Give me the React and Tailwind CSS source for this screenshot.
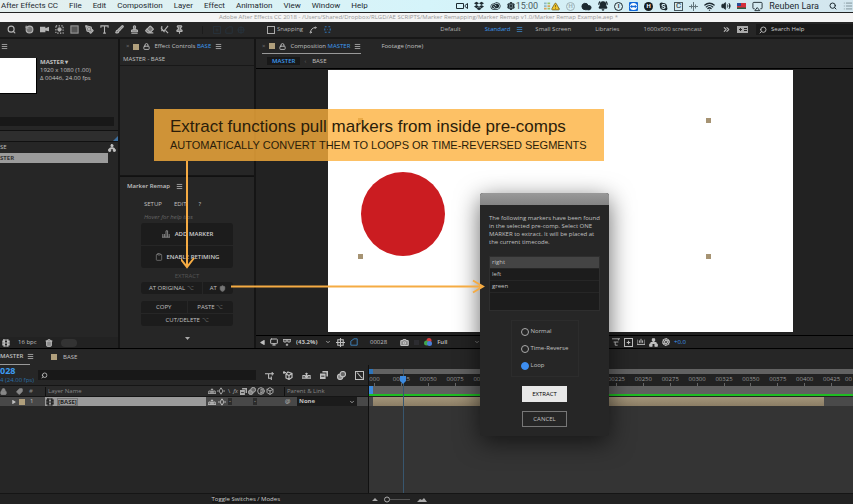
import React, { useState } from 'react';
import {
  Airplay, AlertTriangle, BellRing, Brush, Camera, ChevronDown, ChevronsRight, Cloud, Eraser, Film, List,
  Lock, Menu, Monitor, Network, Pin, RotateCcw, Search, Settings, Stamp, Tag, Trash2, Volume2, Wifi,
  PenTool, Box, Aperture, Shield, Clipboard, Spline, Contrast,
} from 'lucide-react';
import { FaDropbox, FaSkype, FaPlay } from 'react-icons/fa';
import { SiAdobecreativecloud } from 'react-icons/si';

const menus = ['After Effects CC', 'File', 'Edit', 'Composition', 'Layer', 'Effect', 'Animation', 'View', 'Window', 'Help'];
const frames = ['000', '00025', '00050', '00075', '00100', '00125', '00150', '00175', '00200', '00225', '00250', '00275', '00300', '00325', '00350', '00375', '00400', '00425'];
const markers = ['right', 'left', 'green'];
const modes = ['Normal', 'Time-Reverse', 'Loop'];

// small panel glyphs, all on a 10x10 grid
const glyphs = {
  video: <path d="M0 2h6v1.500L10 2v5L6 6v2H0z" fill="currentColor" stroke="none" />,
  region: <><rect x="1" y="1" width="8" height="8" strokeDasharray="1.500 1.500" /><circle cx="5" cy="5" r="1.800" fill="currentColor" /></>,
  square: <rect x="1" y="1" width="8" height="8" fill="#555" stroke="#999" />,
  type: <path d="M1 3V1h8v2M5 1v8M3.500 9h3" />,
  roto: <path d="M9 1L4 7M1 3l4 5M6 6l3 3M2 1v6" />,
  snap: <path d="M2 2h2M6 2h2M2 8h2M6 8h2M2 4v2M8 4v2M5 5h0.500" />,
  flow: <path d="M0 3h4M4 3h6M4 3v5h3M7 6v4M8 1v4" />,
  cube: <path d="M1 1v3M0 2.500h3M5 2l4 1.500v4L6 9.500 3 8V4zM3 4l3 1.500 3-2M6 5.500v4" />,
  shy: <path d="M0 8h10M1 8V5h2.500V8M6.500 8V5H9v3M3.500 6h3M5 2v6M3.500 3h3" />,
  hat: <path d="M0 7.500h10v1.500H0zM2.500 7c0-3 1-5 2.500-5s2.500 2 2.500 5z" fill="currentColor" stroke="none" />,
  frame: <><path d="M0 3h7v7H0zM3 0h7v7H8V2H3z" fill="currentColor" stroke="none" /><path d="M1.500 6.500h4" stroke="#262626" /></>,
  blur: <><circle cx="3.500" cy="6.500" r="3" fill="#888" /><circle cx="6.500" cy="3.500" r="3" fill="#666" /></>,
  graph: <path d="M.5.5h9v9h-9zM2 2c2 0 4 6 6.500 6" />,
  gem: <path d="M5 1l2.500 4L5 9 2.500 5zM0 5h2M8 5h2" />,
  chart: <path d="M5 0v10M0 5h10M2 2h6v6H2z" />,
  mask: <path d="M1 9V4l4-3h4v8z" />,
  aspect: <path d="M0 1h10M2 5h6M4 5v4M4 9h3M8 1v2" />,
  fit: <path d="M.5.5h9v9h-9zM5 3v4M3 5h4" />,
  bars: <path d="M0 2v6h10V2M3 6V3M5 6V1M7 6V3" />,
  addMarker: <path d="M0 9h10M1 9V5M3 5v4M5 9V1h2v8M9 5v4" />,
  glasses: <path d="M0 2h10M1 2v3h3V2M6 2v3h3V2M5 7v3M3.500 8.500h3" />,
};

function Glyph({ name, className = 'h-2 w-2' }) {
  return (
    <svg viewBox="0 0 10 10" className={`shrink-0 ${className}`} fill="none" stroke="currentColor" strokeWidth="1.200">
      {glyphs[name]}
    </svg>
  );
}

function Swatch() {
  return <span className="h-[6px] w-[6px] shrink-0 bg-[#b09f7c]" />;
}

function Burger({ className = 'text-[#aaa]' }) {
  return <Menu className={`h-[7px] w-[7px] shrink-0 ${className}`} strokeWidth={3} />;
}

function Badge({ children, className }) {
  return (
    <span className={`flex h-[9px] w-[9px] shrink-0 items-center justify-center text-[6px] font-bold leading-none ${className}`}>
      {children}
    </span>
  );
}

function MenuBar() {
  return (
    <header className="flex h-[13px] shrink-0 items-center justify-between border-b border-[#222] bg-gradient-to-r from-[#e4efee] via-[#d5f4fa] to-[#d3e6ee] text-[#1d2a30]">
      <nav className="flex gap-[11px] pl-px font-['Roboto',sans-serif] text-[8px] leading-3">
        {menus.map((m) => (
          <button key={m} type="button" className="whitespace-nowrap">{m}</button>
        ))}
      </nav>
      <div className="flex h-3 shrink-0 items-center gap-[6px] overflow-hidden font-['Roboto',sans-serif] text-[9px] leading-3">
        <svg viewBox="0 0 12 8" className="h-2 w-3" fill="none" stroke="currentColor">
          <path d="M.5 1.500h7v5h-7zM9 3.500l2.500-2v5L9 4.500z" />
        </svg>
        <FaDropbox className="h-[10px] w-[10px]" />
        <SiAdobecreativecloud className="h-[10px] w-[11px]" />
        <span className="flex items-center gap-px text-[#4b5b61]"><Settings className="h-2 w-2 text-[#1d2a30]" strokeWidth={4} />15:00</span>
        <span className="flex items-center">
          <svg viewBox="0 0 8 9" className="h-[9px] w-[7px]">
            <path fill="#8fb9c5" d="M0 0h3v2H0zM0 3h3v2H0z" />
            <path fill="#9cc46c" d="M4 0h3v2H4zM4 6h3v2H4z" />
            <path fill="#d9a45a" d="M4 3h3v2H4zM0 6h3v2H0z" />
          </svg>
          <AlertTriangle className="h-[9px] w-[9px] fill-[#f1c62e] text-[#6b5717]" strokeWidth={2} />
        </span>
        <Badge className="rounded-full border border-[#9db0b5] text-[#9db0b5]">H</Badge>
        <Cloud className="h-[11px] w-[11px] fill-[#1d2a30]" />
        <BellRing className="h-[10px] w-[10px] fill-[#1d2a30]" strokeWidth={3} />
        <Badge className="rounded-full border border-[#1d2a30]">I</Badge>
        <Badge className="rounded-[1px] bg-[#1268d8] text-white">
          <svg viewBox="0 0 10 10" className="h-[9px] w-[9px]">
            <circle cx="5" cy="5" r="4" fill="#fff" />
            <path fill="#1268d8" d="M1 5l2.500-2v1.300h3V3L9 5 6.500 7V5.700h-3V7z" />
          </svg>
        </Badge>
        <Badge className="rounded-full bg-[#151d20] text-white">H</Badge>
        <FaSkype className="h-[9px] w-[9px]" />
        <Badge className="border border-[#47575d] text-[8px] font-normal">C</Badge>
        <svg viewBox="0 0 9 9" className="h-[9px] w-[9px]" stroke="#64767c" fill="none">
          <path d="M4.500 0v9M0 4.500h9M2.500 2.500v4M6.500 2.500v4" />
        </svg>
        <Wifi className="h-[11px] w-[11px]" strokeWidth={3} />
        <Volume2 className="h-[10px] w-[10px] fill-current" />
        <svg viewBox="0 0 9 6" className="h-[6px] w-[9px]">
          <path fill="#d4303c" d="M0 0h9v6H0z" />
          <path fill="#274a94" d="M0 0h4v3H0z" />
          <path fill="#2b5f45" d="M0 4.500h9V6H0z" />
        </svg>
        <Airplay className="h-[11px] w-[11px]" />
        <span className="whitespace-nowrap">Reuben Lara</span>
        <Search className="ml-1 h-2 w-2" strokeWidth={3} />
        <List className="h-[10px] w-[10px] text-[#72858c]" />
      </div>
    </header>
  );
}

function Toolbar() {
  const tools = [
    [RotateCcw, 'Rotate'], ['video', 'Camera'], ['region', 'Pan Behind'], ['square', 'Rectangle'], [PenTool, 'Pen'], ['type', 'Type'],
    [Brush, 'Brush'], [Stamp, 'Clone Stamp'], [Eraser, 'Eraser'], ['roto', 'Roto Brush'], [Pin, 'Puppet Pin'],
  ];
  return (
    <div className="flex h-[17px] shrink-0 items-center justify-between overflow-hidden border-b-2 border-[#171717] bg-[#262626] text-[#b4b4b4]">
      <div className="flex items-center gap-[6px] pl-[7px]">
        <Search className="mr-[3px] h-[9px] w-[9px]" strokeWidth={3} />
        {tools.map(([Tool, name]) => (
          <button key={name} type="button" aria-label={name}>
            {typeof Tool === 'string'
              ? <Glyph name={Tool} className="h-[9px] w-[9px]" />
              : <Tool className="h-[9px] w-[9px] fill-[#777]" strokeWidth={3} />}
          </button>
        ))}
        <div className="ml-[12px] flex w-[53px] items-center justify-center gap-1 border-l border-[#1c1c1c] text-[#28323c]">
          <Glyph name="fit" /><Glyph name="mask" /><Glyph name="chart" />
        </div>
        <label className="ml-[6px] flex items-center gap-[2px]">
          <input type="checkbox" className="h-2 w-2 appearance-none border border-[#aaa]" />
          Snapping
        </label>
        <Spline className="h-2 w-2" strokeWidth={3} />
        <Glyph name="snap" className="h-[9px] w-[9px] text-[#2f74b8]" />
      </div>
      <div className="flex items-center gap-6 whitespace-nowrap">
        <button type="button">Default</button>
        <button type="button" className="flex items-center gap-[6px] text-[#3d9bf0]">
          Standard <Burger className="text-[#3d7fb8]" />
        </button>
        <button type="button" className="-ml-3">Small Screen</button>
        <button type="button">Libraries</button>
        <button type="button">1600x900 screencast</button>
        <ChevronsRight className="-ml-1 h-[9px] w-[9px]" strokeWidth={3} />
        <label className="-ml-[18px] flex items-center gap-2">
          <svg viewBox="0 0 11 7" className="h-[7px] w-[11px]">
            <path d="M0 0h11v7H0z" fill="#aaa" />
            <path d="M2 3.500h3M3.500 2v3M7 2.500h3M7 4.500h3" stroke="#222" />
          </svg>
          <span className="flex h-[11px] items-center gap-1 bg-[#1a1a1a] pl-[3px]">
            <Search className="h-2 w-2 -scale-x-100" strokeWidth={3} />
            <input aria-label="Search Help" placeholder="Search Help" className="w-[82px] bg-transparent placeholder:text-[#d0d0d0]" />
          </span>
        </label>
      </div>
    </div>
  );
}

function ProjectPanel() {
  return (
    <section className="flex w-[118px] shrink-0 flex-col overflow-hidden bg-[#262626]">
      <div className="flex h-[15px] items-center pl-px"><Burger /></div>
      <div className="mt-1 flex h-[59px] gap-[3px] leading-[8px]">
        <div className="h-[36px] w-[37px] shrink-0 border-r border-b border-black bg-white" />
        <div className="whitespace-nowrap">
          <p className="font-bold">MASTER ▾</p>
          <p>1920 x 1080 (1.00)</p>
          <p>Δ 00446, 24.00 fps</p>
        </div>
      </div>
      <input aria-label="Search project" className="mr-1 h-[9px] bg-[#181818]" />
      <div className="mt-1 flex h-[12px] shrink-0 items-end justify-end border-y border-[#111] bg-[#2e2e2e]">
        <svg viewBox="0 0 5 5" className="h-[5px] w-[5px]"><path d="M5 0v5H0z" fill="#3d6f9f" /></svg>
      </div>
      <div className="flex h-[11px] items-center justify-between pr-[2px]">
        <span>SE</span>
        <Network className="h-2 w-2 fill-current" strokeWidth={3} />
      </div>
      <div className="mr-[10px] flex h-[10px] items-center bg-[#9b9b9b] font-bold text-[#333]">STER</div>
      <div className="mt-auto flex h-[11px] items-center gap-[8px] bg-[#222] pl-[2px]">
        <Film className="h-2 w-2" strokeWidth={3} />
        <span>16 bpc</span>
        <Trash2 className="h-2 w-2 fill-[#888]" strokeWidth={3} />
        <span className="h-2 w-4 rounded-full bg-[#333]" />
      </div>
    </section>
  );
}

function MarkerRemap() {
  return (
    <section className="flex h-[172px] shrink-0 flex-col border-t border-[#111] bg-[#262626]">
      <div className="flex h-[18px] items-center gap-[6px] pl-[7px] font-semibold">Marker Remap <Burger /></div>
      <div className="flex flex-1 flex-col px-[21px]">
        <div className="flex h-[18px] items-center gap-3 pl-[3px]">
          <button type="button">SETUP</button>
          <button type="button">EDIT</button>
          <button type="button">?</button>
        </div>
        <p className="h-[10px] pl-[3px] text-[#666] italic leading-[8px]">Hover for help tips</p>
        <div className="flex flex-col gap-px font-semibold text-[#ccc]">
          <button type="button" className="flex h-[22px] items-center justify-center gap-1 rounded-t-[3px] bg-[#1c1c1c]">
            <Glyph name="addMarker" className="h-2 w-[10px] text-[#888]" /> ADD MARKER
          </button>
          <button type="button" className="flex h-[22px] items-center justify-center gap-1 rounded-b-[3px] bg-[#1c1c1c]">
            <Clipboard className="h-2 w-2 text-[#888]" /> ENABLE RETIMING
          </button>
        </div>
        <p className="mt-1 h-[10px] text-center text-[#555] leading-[8px]">EXTRACT</p>
        <div className="flex gap-px">
          <button type="button" className="h-3 flex-[2] whitespace-nowrap rounded-l-[3px] bg-[#1c1c1c]">AT ORIGINAL <span className="text-[#666]">⌥</span></button>
          <button type="button" className="flex h-3 flex-1 items-center justify-center gap-[2px] rounded-r-[3px] bg-[#1c1c1c]">
            AT <Shield className="h-[7px] w-[7px] fill-[#777] text-[#777]" />
          </button>
        </div>
        <div className="mt-[7px] grid grid-cols-2 gap-px">
          <button type="button" className="h-3 rounded-tl-[3px] bg-[#1c1c1c]">COPY</button>
          <button type="button" className="h-3 rounded-tr-[3px] bg-[#1c1c1c]">PASTE <span className="text-[#666]">⌥</span></button>
          <button type="button" className="col-span-2 h-3 rounded-b-[3px] bg-[#1c1c1c]">CUT/DELETE <span className="text-[#666]">⌥</span></button>
        </div>
        <svg viewBox="0 0 5 3" className="mx-auto mt-auto mb-2 h-[3px] w-[5px]"><path d="M0 0h5L2.500 3z" fill="#aaa" /></svg>
      </div>
    </section>
  );
}

function EffectColumn() {
  return (
    <div className="flex w-[134px] shrink-0 flex-col gap-px">
      <section className="flex-1 bg-[#262626]">
        <div className="flex h-[15px] items-center gap-1 pl-[6px]">
          <span className="text-[#777]">×</span>
          <Swatch />
          <Lock className="h-[7px] w-[7px]" strokeWidth={3} />
          <span className="whitespace-nowrap">Effect Controls <span className="text-[#3d9bf0]">BASE</span></span>
          <Burger />
        </div>
        <p className="flex h-3 items-center border-b border-[#181818] pl-[3px]">MASTER - BASE</p>
      </section>
      <MarkerRemap />
    </div>
  );
}

function Composition() {
  const handle = 'absolute h-[5px] w-[5px] bg-[#a69373]';
  return (
    <section className="flex min-w-0 flex-1 flex-col bg-[#262626]">
      <div className="flex h-[15px] shrink-0 items-stretch gap-[20px] pl-[6px]">
        <div className="flex items-center gap-1 border-b border-[#999]">
          <span className="text-[#777]">×</span>
          <Swatch />
          <Lock className="h-[7px] w-[7px]" strokeWidth={3} />
          <span className="whitespace-nowrap">Composition <span className="text-[#3d9bf0]">MASTER</span></span>
          <Burger />
        </div>
        <span className="flex items-center">Footage (none)</span>
      </div>
      <div className="flex h-[15px] shrink-0 items-center border-b border-black pl-[11px]">
        <span className="bg-[#181818] px-[5px] font-semibold leading-[8px] text-[#3d9bf0]">MASTER</span>
        <span className="mr-[6px] ml-1 text-[#666]">‹</span>
        <span>BASE</span>
      </div>
      <div className="flex min-h-0 flex-1 bg-[#222] pt-px pr-[60px] pb-[3px] pl-[72px]">
        <div className="relative flex-1 bg-white">
          <span className="absolute top-[102px] left-[33px] h-[84px] w-[84px] rounded-full bg-[#cb1c21]" />
          <span className={`${handle} top-[48px] left-[30px]`} />
          <span className={`${handle} top-[48px] left-[378px]`} />
          <span className={`${handle} top-[184px] left-[30px]`} />
          <span className={`${handle} top-[184px] left-[378px]`} />
        </div>
      </div>
      <div className="flex h-[13px] shrink-0 items-center gap-[5px] border-t border-black bg-[#222] pl-1">
        <FaPlay className="h-[5px] w-[5px] rotate-180" />
        <Monitor className="h-2 w-2" strokeWidth={3} />
        <Glyph name="glasses" />
        <select aria-label="Magnification" className="w-[24px] appearance-none font-bold"><option>(43.2%)</option></select>
        <ChevronDown className="h-[6px] w-[6px]" strokeWidth={3} />
        <Glyph name="chart" className="h-[9px] w-[9px]" />
        <Glyph name="mask" className="h-2 w-2 text-[#3d7fb8]" />
        <span className="mr-[8px] ml-[7px]">00028</span>
        <Camera className="h-[9px] w-[9px] fill-[#888]" strokeWidth={3} />
        <span className="h-[5px] w-[5px] bg-[#2c2c30]" />
        <svg viewBox="0 0 8 8" className="h-2 w-2">
          <circle cx="5" cy="2.500" r="2.500" fill="#d83d3d" />
          <circle cx="2.500" cy="5" r="2.500" fill="#42a44c" />
          <circle cx="5.500" cy="5.500" r="2.500" fill="#4a7fd8" />
        </svg>
        <select aria-label="Resolution" className="w-[32px] appearance-none font-semibold"><option>Full</option></select>
        <ChevronDown className="h-[6px] w-[6px]" />
        <div className="ml-auto flex w-[241px] items-center gap-1">
          <Glyph name="aspect" />
          <Glyph name="fit" className="h-[9px] w-[9px]" />
          <Glyph name="bars" />
          <Network className="h-[9px] w-[9px] fill-current" strokeWidth={3} />
          <Aperture className="h-2 w-2" strokeWidth={3} />
          <span className="text-[#3d9bf0]">+0.0</span>
        </div>
      </div>
    </section>
  );
}

function LayerColumn() {
  return (
    <div className="flex w-[369px] shrink-0 flex-col border-r border-[#111] bg-[#262626]">
      <div className="flex h-[20px] shrink-0 items-center">
        <div className="w-[38px] shrink-0 text-[#3d9bf0]">
          <p className="text-[9px] font-bold leading-[10px]">028</p>
          <p className="whitespace-nowrap leading-[8px] text-[#2a6ea8]">4 (24.00 fps)</p>
        </div>
        <label className="flex h-[10px] w-[218px] items-center bg-[#181818] pl-[3px]">
          <Search className="h-[7px] w-[7px] -scale-x-100" strokeWidth={3} />
          <input aria-label="Search layers" className="w-full bg-transparent" />
        </label>
        <div className="flex flex-1 items-center justify-around pl-1">
          <Glyph name="flow" className="h-[9px] w-[9px]" />
          <Glyph name="cube" className="h-[10px] w-[10px]" />
          <Glyph name="shy" className="h-[9px] w-[9px]" />
          <Glyph name="frame" className="h-2 w-2" />
          <Glyph name="blur" className="h-[9px] w-[9px]" />
          <Glyph name="graph" className="h-[9px] w-[9px]" />
        </div>
      </div>
      <div className="flex h-[12px] shrink-0 items-center border-y border-[#151515] bg-[#2a2a2a] text-[#888]">
        <Lock className="h-[7px] w-[7px] fill-[#888]" strokeWidth={3} />
        <Tag className="ml-[9px] h-[7px] w-[7px] -scale-x-100 fill-current" />
        <span className="ml-[6px] w-[4px]">#</span>
        <span className="ml-3 w-[163px] border-l border-[#111] pl-[2px]">Layer Name</span>
        <div className="flex w-[72px] items-center gap-px text-[#aaa]">
          <Glyph name="shy" /><Glyph name="gem" /><span className="px-[2px]">\</span><i className="pr-px">fx</i>
          <Glyph name="frame" className="h-[7px] w-[7px]" /><Glyph name="blur" /><Contrast className="h-2 w-2" strokeWidth={3} /><Box className="h-2 w-2" strokeWidth={3} />
        </div>
        <span className="ml-[4px] border-l border-[#111] pl-[2px]">Parent &amp; Link</span>
      </div>
      <div className="flex h-[9px] shrink-0 items-center bg-[#484848]">
        <FaPlay className="ml-[12px] h-[4px] w-[4px]" />
        <span className="ml-[3px] h-[6px] w-[6px] bg-[#b09f7c]" />
        <span className="ml-[5px] w-[15px]">1</span>
        <div className="flex h-full w-[161px] items-center gap-[3px] bg-[#9b9b9b] pl-px font-bold text-[#222]">
          <Film className="h-2 w-2" strokeWidth={3} /><span className="border border-[#777] leading-[6px]">[BASE]</span>
        </div>
        <div className="flex w-[79px] items-center gap-[2px] pl-[2px]">
          <Glyph name="shy" /><Glyph name="gem" /><span className="bg-[#2c2c2c] px-px leading-[7px]">-</span>
          <span className="ml-[19px] bg-[#2c2c2c] px-px leading-[7px]">-</span>
        </div>
        <span className="w-[12px]">@</span>
        <select aria-label="Parent" className="h-full w-[60px] appearance-none bg-[#1b1b1b] pl-[2px] font-bold"><option>None</option></select>
        <ChevronDown className="-ml-2 h-[6px] w-[6px]" strokeWidth={3} />
      </div>
    </div>
  );
}

function Tracks() {
  return (
    <div className="relative mt-1 flex min-w-0 flex-1 flex-col bg-[#343434]">
      <div className="h-[5px] border-x-4 border-r-0 border-[#2f74b8] bg-[#626262]" />
      <div className="flex h-[12px] overflow-hidden bg-[#222]">
        <div className="-ml-2 flex flex-1">
          {frames.map((f) => (
            <div key={f} className="flex w-0 flex-1 flex-col items-center pt-px leading-[8px] text-[#999]">
              {f}
              <span className="h-[3px] w-px bg-[#666]" />
            </div>
          ))}
        </div>
        <span className="w-[8px] pt-px leading-[8px] text-[#999]">00</span>
      </div>
      <div className="h-[8px] border-l-4 border-[#3d8be0] bg-[#606060]" />
      <div className="h-[2px] bg-[#1fbc22]" />
      <div className="flex h-[10px] border-t border-[#222] bg-[#4a4a4a] pl-[4px]">
        <span className="w-[94%] bg-gradient-to-b from-[#a3957a] to-[#8c7e65]" />
      </div>
      <span className="absolute top-0 bottom-0 left-[34px] w-px bg-[#38566e]" />
      <svg viewBox="0 0 6 8" className="absolute top-[7px] left-[31px] h-2 w-[6px]"><path d="M0 0h6v5L3 8 0 5z" fill="#3d8be0" /></svg>
    </div>
  );
}

function Timeline() {
  return (
    <section className="flex min-h-0 flex-1 flex-col border-t border-black bg-[#262626]">
      <div className="flex h-[16px] shrink-0 items-stretch">
        <div className="flex w-[30px] items-center gap-1 border-b border-[#999] font-semibold">MASTER <Burger /></div>
        <span className="ml-[21px] flex items-center gap-[6px]"><Swatch />BASE</span>
      </div>
      <div className="flex min-h-0 flex-1">
        <LayerColumn />
        <Tracks />
      </div>
      <footer className="flex h-[11px] shrink-0 items-center border-t border-[#151515] bg-[#222]">
        <div className="flex w-[369px] justify-end pr-[89px]">
          <button type="button" className="bg-[#1a1a1a] leading-[8px] text-[#ccc]">Toggle Switches / Modes</button>
        </div>
        <svg viewBox="0 0 56 7" className="ml-[3px] h-[7px] w-[56px]" fill="#aaa">
          <path d="M0 5l3-3 3 3zM45 6l3-3 2 1 2-2 3 4z" />
          <path d="M18 3.500h20" stroke="#555" />
          <circle cx="15" cy="3.500" r="2.500" fill="none" stroke="#aaa" />
        </svg>
      </footer>
    </section>
  );
}

function ExtractDialog() {
  const [marker, setMarker] = useState('right');
  const [mode, setMode] = useState('Loop');
  return (
    <div role="dialog" aria-label="Extract markers" className="absolute top-[193px] left-[480px] w-[129px] overflow-hidden rounded-[3px] bg-[#262626] shadow-[0_6px_24px_rgba(0,0,0,0.6)]">
      <div className="h-[12px] bg-gradient-to-b from-[#999] to-[#848484]" />
      <div className="px-[9px] pt-[9px] pb-[9px]">
        <p className="whitespace-nowrap leading-[8px]">
          The following markers have been found<br />in the selected pre-comp. Select ONE<br />MARKER to extract. It will be placed at<br />the current timecode.
        </p>
        <ul className="mt-[10px] h-[55px] border border-[#2e2e2e] bg-[#1c1c1c]">
          {markers.map((m) => (
            <li key={m} className="border-b border-[#262626]">
              <button type="button" onClick={() => setMarker(m)} className={`block h-[11px] w-full pl-[2px] text-left ${marker === m ? 'bg-[#444]' : ''}`}>{m}</button>
            </li>
          ))}
        </ul>
        <fieldset className="mx-auto mt-[9px] flex h-[57px] w-[68px] flex-col justify-center gap-[9px] border border-[#2c2c2c] pl-[9px]">
          {modes.map((m) => (
            <label key={m} className="flex h-2 items-center gap-[2px] whitespace-nowrap">
              <input type="radio" name="mode" checked={mode === m} onChange={() => setMode(m)} className="h-2 w-2 shrink-0 appearance-none rounded-full border border-[#aaa] checked:border-[#3d8ef0] checked:bg-[#3d8ef0]" />
              {m}
            </label>
          ))}
        </fieldset>
        <div className="mx-auto mt-[9px] flex w-[45px] flex-col gap-[9px]">
          <button type="button" className="h-4 bg-[#e8e8e8] text-black">EXTRACT</button>
          <button type="button" className="h-4 border border-[#777]">CANCEL</button>
        </div>
      </div>
    </div>
  );
}

export default function App() {
  return (
    <div className="relative flex h-screen flex-col overflow-hidden bg-[#151515] font-['Open_Sans',sans-serif] text-[6px] text-[#c0c0c0]">
      <MenuBar />
      <div className="h-[9px] shrink-0 bg-[#f4f4f4] pr-4 text-center leading-[9px] text-[#999]">
        Adobe After Effects CC 2018 - /Users/Shared/Dropbox/RLGD/AE SCRIPTS/Marker Remapping/Marker Remap v1.0/Marker Remap Example.aep *
      </div>
      <Toolbar />
      <main className="flex min-h-0 flex-[2] gap-[2px]">
        <ProjectPanel />
        <EffectColumn />
        <Composition />
      </main>
      <Timeline />

      {/* callout and arrows */}
      <div className="absolute top-[109px] left-[154px] w-[450px] bg-[rgba(253,176,60,0.79)] py-2 pl-4 font-['Liberation_Sans',sans-serif] whitespace-nowrap text-[#2b1d0a]">
        <p className="text-[17px] leading-5">Extract functions pull markers from inside pre-comps</p>
        <p className="text-[11px] leading-4">AUTOMATICALLY CONVERT THEM TO LOOPS OR TIME-REVERSED SEGMENTS</p>
      </div>
      <ExtractDialog />
      <svg viewBox="0 0 304 136" className="pointer-events-none absolute top-[161px] left-[181px] h-[136px] w-[304px]" fill="none" stroke="#f5ab43" strokeWidth="2">
        <path d="M6 0v106M-1 97l7 9 7-9M50 125.500h251M292 119.500l10 6-10 6" />
      </svg>
    </div>
  );
}
